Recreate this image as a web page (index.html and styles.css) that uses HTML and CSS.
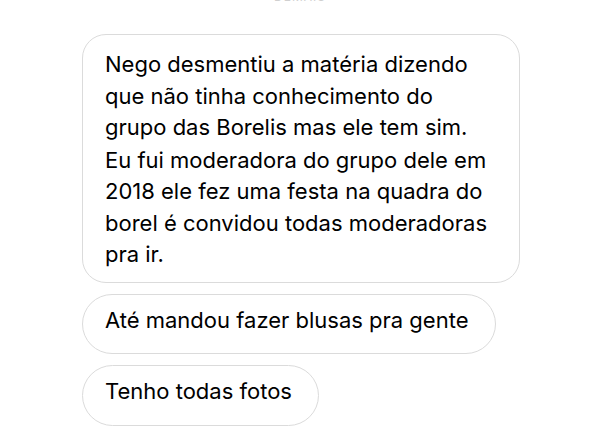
FILE: index.html
```html
<!DOCTYPE html>
<html>
	<head>
		<link rel="stylesheet" href="styles.css">
	</head>
	<body>
	<div class="stamp">DEMAIS</div>
	<div class="thread">
		<div class="bubble big">
			<p>Nego desmentiu a matéria dizendo que não tinha conhecimento do grupo das Borelis mas ele tem sim.</p>
			<p>Eu fui moderadora do grupo dele em 2018 ele fez uma festa na quadra do borel é convidou todas moderadoras pra ir.</p>
		</div>
		<div class="bubble">Até mandou fazer blusas pra gente</div>
		<div class="bubble">Tenho todas fotos</div>
	</div>
	</body>
</html>
```

FILE: styles.css
```css
body{
	margin: 0;
	background-color: #fff;
	font-family: Inter, "Liberation Sans", sans-serif;
	color: #000;
	overflow: hidden;
}
.stamp{
	text-align: center;
	font-size: 12px;
	line-height: 14px;
	color: #d0d0d0;
	letter-spacing: 1px;
	margin-top: -10px;
	height: 4px;
}
.thread{
	display: flex;
	flex-direction: column;
	align-items: flex-start;
	gap: 11px;
	padding-left: 82px;
	padding-top: 40px;
}
.bubble{
	border: 1px solid #dbdbdb;
	border-radius: 31px;
	padding: 10px 26px 17px 22px;
	font-size: 22px;
	line-height: 31.5px;
}
.big{
	width: 390px;
	border-radius: 24px;
	padding-top: 14px;
	padding-right: 24px;
	padding-bottom: 11px;
}
.big p{
	margin: 0;
}
.big p + p{
	margin-top: 1px;
}
```
